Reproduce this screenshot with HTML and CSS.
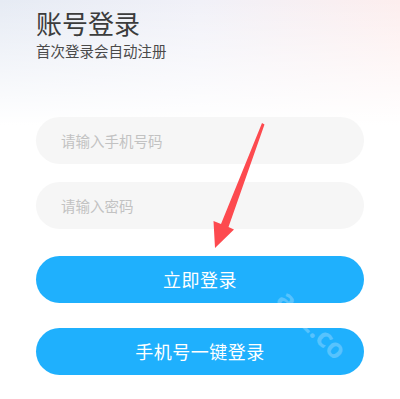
FILE: index.html
```html
<!DOCTYPE html>
<html lang="zh">
<head>
<meta charset="utf-8">
<link rel="stylesheet" href="styles.css">
</head>
<body>
<div class="page">
  <div class="head">
    <h1 class="title">账号登录</h1>
    <p class="sub">首次登录会自动注册</p>
  </div>
  <div class="form">
    <div class="field">请输入手机号码</div>
    <div class="field field-2">请输入密码</div>
    <div class="btn btn-1">立即登录</div>
    <div class="btn btn-2">手机号一键登录</div>
  </div>
  <svg class="arrow" width="400" height="399" viewBox="0 0 400 399">
    <polygon points="262,123 264.5,124.5 228.5,227 234,229.5 215,248 213.5,221 221,224" fill="#fd4a4f"/>
  </svg>
  <div class="mark">anz.co</div>
</div>
</body>
</html>
```
FILE: styles.css
```css
html, body {
  margin: 0;
  padding: 0;
  background: #fff;
}
.page {
  position: relative;
  width: 400px;
  height: 399px;
  overflow: hidden;
  font-family: "Noto Sans CJK SC", "Noto Sans", sans-serif;
  background:
    linear-gradient(180deg, rgba(255,255,255,0) 0px, #ffffff 125px),
    linear-gradient(90deg, #e6ebf4 0%, #f1f1f8 50%, #fdeeee 100%);
  background-repeat: no-repeat;
  background-size: 400px 130px, 400px 130px;
}
.head {
  padding: 6px 36px 0;
}
.title {
  margin: 0;
  font-size: 26px;
  line-height: 34px;
  font-weight: 400;
  color: #3c3c3c;
}
.sub {
  margin: 0;
  font-size: 14.5px;
  line-height: 21px;
  color: #4a4a4a;
}
.form {
  display: flex;
  flex-direction: column;
  padding: 56px 36px 0;
}
.field {
  height: 47px;
  border-radius: 24px;
  background: #f6f6f6;
  color: #c2c2c2;
  font-size: 14.5px;
  line-height: 47px;
  padding-left: 25px;
}
.field-2 {
  margin-top: 18px;
}
.btn {
  height: 47px;
  border-radius: 24px;
  background: #1fb0fd;
  color: #ffffff;
  font-size: 18px;
  line-height: 47px;
  text-align: center;
  letter-spacing: 0.5px;
}
.btn-1 {
  margin-top: 27px;
}
.btn-2 {
  margin-top: 25px;
}
.arrow {
  position: absolute;
  left: 0;
  top: 0;
}
.mark {
  position: absolute;
  left: 292px;
  top: 284px;
  font-family: "Noto Sans", sans-serif;
  font-size: 27px;
  font-weight: 700;
  line-height: 27px;
  color: rgba(255,255,255,0.25);
  transform: rotate(45deg);
  transform-origin: left top;
}
```
